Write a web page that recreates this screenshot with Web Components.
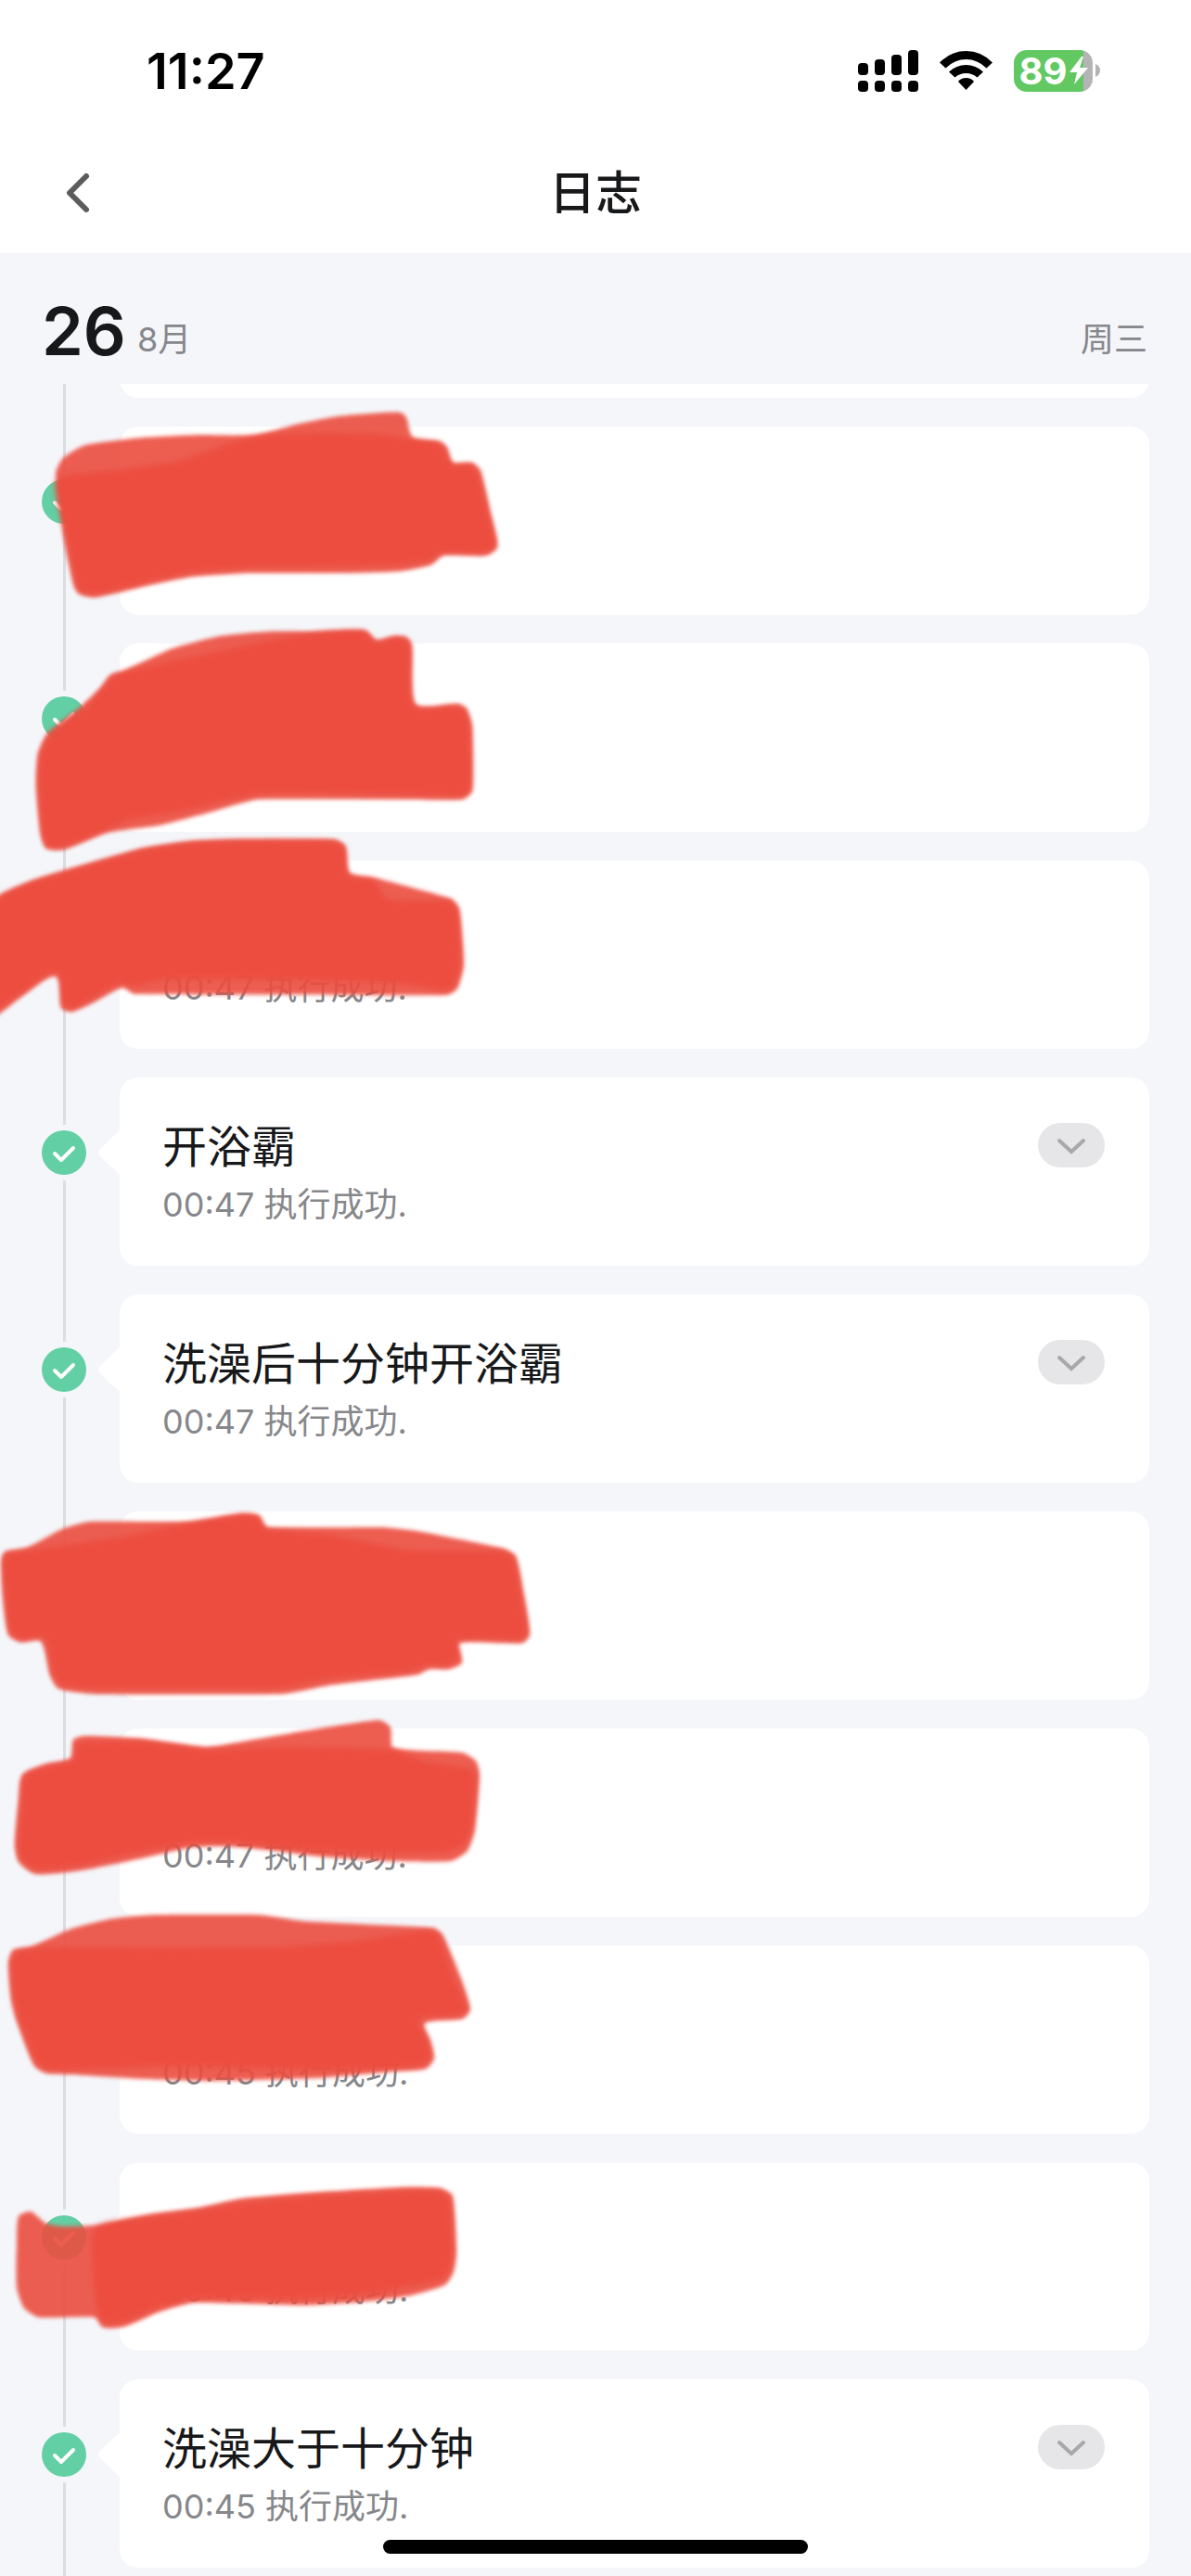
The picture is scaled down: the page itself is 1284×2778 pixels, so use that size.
<!DOCTYPE html>
<html lang="zh-CN">
<head>
<meta charset="utf-8">
<meta name="viewport" content="width=device-width, initial-scale=1">
<title>日志</title>
<style>
   body {
      margin: 0;
      background: #f5f6fa;
      color: #17181a;
      font-family: Inter, "Noto Sans CJK SC", sans-serif;
   }
</style>
</head>
<body>
<log-page>
   <status-bar slot="top" time="11:27" battery="89"></status-bar>
   <nav-bar slot="top">日志</nav-bar>
   <date-row slot="top" day="26" month="8月" weekday="周三"></date-row>

   <log-entry class="scrolled"></log-entry>
   <log-entry>
      <marker-scribble slot="mark"
         wash="60,50 68,34 92,20 153,12 214,9 276,9 318,-2 364,-11 413,-15 432,-15 438,-10 445,12 474,16 482,22 488,39 509,39 518,47 529,93 536,130 524,139 478,139 465,149 432,156 375,158 268,158 207,162 165,170 103,184 86,181 80,173 69,120 64,70"
         core="61,58 120,48 190,38 240,21 280,10 340,7 405,8 446,14 474,19 488,41 506,41 514,50 526,94 534,128 522,136 476,136 462,145 430,149 375,151 268,152 207,157 165,166 103,181 88,178 83,170 72,120"></marker-scribble>
   </log-entry>
   <log-entry>
      <marker-scribble slot="mark"
         wash="39,153 41,119 51,97 87,68 108,48 119,34 132,30 184,6 237,-8 291,-13 337,-13 394,-14 406,-4 425,-8 438,-7 444,0 448,65 494,65 503,70 509,89 509,159 499,168 440,168 279,168 230,181 172,196 115,204 69,222 50,221 44,206"
         core="42,153 44,119 55,99 92,70 110,50 122,35 134,31 190,18 240,8 300,-5 350,-12 392,-13 405,-1 425,-6 436,-5 442,8 445,67 492,68 501,73 506,89 507,157 497,164 440,163 279,162 200,180 140,190 110,203 69,219 51,218 46,204"></marker-scribble>
   </log-entry>
   <log-entry time="00:47">
      <marker-scribble slot="mark"
         wash="-12,49 0,37 34,22 69,11 153,-13 207,-21 260,-23 360,-23 372,-16 377,13 406,19 486,41 495,52 500,112 493,138 482,145 380,145 145,144 132,137 99,154 77,163 66,159 60,125 23,147 -12,168"
         core="-12,53 4,37 36,23 69,13 153,-11 207,-19 260,-21 358,-20 371,-14 375,16 402,21 418,42 484,44 493,54 496,112 489,136 478,140 430,132 300,128 180,128 142,136 130,132 97,150 77,160 69,156 61,120 23,143 -12,160"></marker-scribble>
   </log-entry>
   <log-entry time="00:47">开浴霸</log-entry>
   <log-entry time="00:47">洗澡后十分钟开浴霸</log-entry>
   <log-entry>
      <marker-scribble slot="mark"
         wash="2,50 6,43 29,39 67,19 97,11 206,11 261,2 279,4 288,17 412,17 455,22 543,40 556,48 565,90 571,133 563,142 496,142 498,163 484,170 463,170 450,176 358,187 303,197 105,197 63,191 54,177 44,140 22,141 9,133 3,90"
         core="3,53 8,46 60,38 130,28 206,12 261,4 277,6 287,19 360,26 440,42 540,43 553,50 561,90 568,131 560,138 493,138 494,160 481,166 460,166 446,172 358,180 303,190 105,191 67,187 58,175 48,136 23,137 12,130 6,90"></marker-scribble>
   </log-entry>
   <log-entry time="00:47">
      <marker-scribble slot="mark"
         wash="24,50 50,38 76,32 79,12 92,8 153,11 222,20 268,13 344,0 409,-9 421,-1 424,21 498,26 513,35 517,49 512,109 504,132 486,143 421,143 344,138 291,131 245,127 207,128 153,140 88,153 38,157 20,144 16,126 20,76"
         core="27,51 53,41 80,34 84,16 153,14 222,23 300,20 420,23 460,36 508,44 513,52 508,108 499,126 480,133 421,134 344,132 291,127 245,122 207,123 153,133 88,147 40,152 24,141 20,126 24,76"></marker-scribble>
   </log-entry>
   <log-entry time="00:45">
      <marker-scribble slot="mark"
         wash="9,19 14,5 34,1 77,-18 122,-29 168,-33 279,-33 329,-26 467,-19 477,-12 497,35 507,69 499,79 458,84 464,102 468,122 459,133 421,136 344,143 230,146 153,144 77,139 50,138 37,130 18,82 12,59"
         core="13,19 18,7 60,2 160,3 300,2 380,-4 462,-16 473,-9 490,38 503,68 495,75 452,80 460,102 464,120 455,129 421,132 344,134 230,131 153,131 77,134 52,133 40,126 22,81 16,58"></marker-scribble>
   </log-entry>
   <log-entry time="00:45">
      <marker-scribble slot="mark"
         wash="20,58 33,53 50,66 69,69 111,67 161,56 214,49 260,39 329,33 432,27 475,28 488,36 492,95 489,118 480,132 440,144 383,151 325,154 210,151 172,161 134,177 111,178 102,167 42,167 26,157 18,135 18,88"
         core="104,70 161,59 214,52 260,44 329,37 432,31 473,31 484,39 488,95 485,115 474,127 430,136 383,143 325,147 210,147 172,156 134,172 113,173 105,160 101,120"></marker-scribble>
   </log-entry>
   <log-entry time="00:45">洗澡大于十分钟</log-entry>
</log-page>

<script>
class LogPage extends HTMLElement {
   constructor() {
      super();
      this.attachShadow({mode: 'open'}).innerHTML = `
         <style>
            :host {
               display: flex;
               flex-direction: column;
               height: 100vh;
               overflow: hidden;
            }
            main {
               flex: 1;
               min-height: 0;
               overflow: hidden;
            }
            /* rows already scrolled under the date */
            ::slotted(.scrolled) {
               margin-top: -188px;
            }
            .home {
               position: fixed;
               bottom: 24px;
               left: 50%;
               z-index: 2;
               width: 458px;
               height: 15px;
               margin-left: -229px;
               border-radius: 8px;
               background: #000;
            }
         </style>
         <slot name="top"></slot>
         <main><slot></slot></main>
         <div class="home"></div>
      `;
   }
}
customElements.define('log-page', LogPage);

class StatusBar extends HTMLElement {
   connectedCallback() {
      this.attachShadow({mode: 'open'}).innerHTML = `
         <style>
            :host {
               display: flex;
               justify-content: space-between;
               align-items: center;
               height: 152px;
               padding: 0 98px 0 158px;
               background: #fff;
               color: #000;
            }
            time {
               padding-top: 2px;
               font-size: 54px;
               font-weight: 600;
               line-height: 64px;
            }
            .icons {
               display: flex;
               align-items: center;
               gap: 23px;
            }
            svg {
               display: block;
            }
            .battery {
               display: flex;
               align-items: center;
               gap: 3px;
            }
            .level {
               display: flex;
               align-items: center;
               justify-content: center;
               gap: 2px;
               width: 85px;
               height: 45px;
               border-radius: 14px;
               background: linear-gradient(90deg, #62c962 75px, #b5b3b6 75px);
               color: #fff;
               font-size: 40px;
               font-weight: 700;
               line-height: 45px;
            }
         </style>
         <time>${this.getAttribute('time')}</time>
         <div class="icons">
            <svg width="65" height="45" viewBox="0 0 65 45">
               <rect x="0" y="14" width="11" height="13" rx="4"/>
               <rect x="18" y="10" width="11" height="17" rx="4"/>
               <rect x="36" y="5" width="11" height="22" rx="4"/>
               <rect x="54" y="0" width="11" height="27" rx="4"/>
               <rect x="0" y="33" width="11" height="12" rx="4"/>
               <rect x="18" y="33" width="11" height="12" rx="4"/>
               <rect x="36" y="33" width="11" height="12" rx="4"/>
               <rect x="54" y="33" width="11" height="12" rx="4"/>
            </svg>
            <svg width="57" height="42" viewBox="0 0 57 42">
               <path d="M0 12.500Q12 0 28.500 0T57 12.500L50.500 18.500Q41 9 28.500 9T6.500 18.500Z"/>
               <path d="M10 22.500Q18 15 28.500 15T47 22.500L40.500 28.500Q35.500 24 28.500 24T16.500 28.500Z"/>
               <path d="M20 33Q23 29 28.500 29T37 33L28.500 42Z"/>
            </svg>
            <div class="battery">
               <div class="level">
                  <span>${this.getAttribute('battery')}</span>
                  <svg width="20" height="30" viewBox="0 0 20 30">
                     <path d="M13 0L0 17H8L5 30L20 12H11L15 0Z" fill="#fff"/>
                  </svg>
               </div>
               <svg width="5" height="14" viewBox="0 0 5 14">
                  <path d="M0 0Q5 2 5 7T0 14Z" fill="#b5b3b6"/>
               </svg>
            </div>
         </div>
      `;
   }
}
customElements.define('status-bar', StatusBar);

class NavBar extends HTMLElement {
   constructor() {
      super();
      this.attachShadow({mode: 'open'}).innerHTML = `
         <style>
            :host {
               display: grid;
               grid-template-columns: 120px 1fr 120px;
               align-items: center;
               height: 121px;
               box-sizing: border-box;
               padding-bottom: 10px;
               background: #fff;
            }
            button {
               width: 120px;
               height: 96px;
               padding: 0 0 0 70px;
               border: 0;
               background: none;
            }
            svg {
               display: block;
            }
            h1 {
               margin: 0;
               font-size: 50px;
               font-weight: 500;
               line-height: 64px;
               text-align: center;
            }
         </style>
         <button type="button" aria-label="返回">
            <svg width="28" height="46" viewBox="0 0 28 46" fill="none" stroke="#5c5c5e" stroke-width="6" stroke-linecap="round" stroke-linejoin="round">
               <path d="M23 5L5 23L23 41"/>
            </svg>
         </button>
         <h1><slot></slot></h1>
      `;
   }
}
customElements.define('nav-bar', NavBar);

class DateRow extends HTMLElement {
   connectedCallback() {
      this.attachShadow({mode: 'open'}).innerHTML = `
         <style>
            :host {
               display: flex;
               align-items: flex-end;
               gap: 12px;
               height: 141px;
               box-sizing: border-box;
               padding: 0 47px 13px 45px;
               color: #86878b;
               font-size: 36px;
               line-height: 70px;
            }
            strong {
               color: #17181a;
               font-size: 72px;
               font-weight: 600;
               line-height: 88px;
            }
            .weekday {
               margin-left: auto;
            }
         </style>
         <strong>${this.getAttribute('day')}</strong>
         <span>${this.getAttribute('month')}</span>
         <span class="weekday">${this.getAttribute('weekday')}</span>
      `;
   }
}
customElements.define('date-row', DateRow);

class LogEntry extends HTMLElement {
   connectedCallback() {
      const time = this.getAttribute('time');
      const titled = this.textContent.trim() !== '';

      this.attachShadow({mode: 'open'}).innerHTML = `
         <style>
            :host {
               display: grid;
               grid-template-columns: 105px 24px 1fr;
               position: relative;
               padding-right: 45px;
            }
            .rail {
               display: flex;
               flex-direction: column;
               padding: 0 12px 0 45px;
            }
            .line {
               width: 3px;
               height: 51px;
               margin-left: 23px;
               background: #dcdde1;
            }
            .line.rest {
               flex: 1;
            }
            .dot {
               display: block;
               margin: 6px 0;
            }
            .pointer {
               display: block;
               margin-top: 57px;
            }
            .card {
               display: flex;
               justify-content: space-between;
               align-items: flex-start;
               min-height: 203px;
               box-sizing: border-box;
               margin-bottom: 31px;
               padding: 49px 48px 42px 46px;
               border-radius: 20px;
               background: #fff;
            }
            h2 {
               min-height: 52px;
               margin: 0 0 12px;
               font-size: 48px;
               font-weight: 400;
               line-height: 52px;
            }
            p {
               margin: 0;
               color: #86878b;
               font-size: 36px;
               line-height: 48px;
            }
            button {
               display: flex;
               align-items: center;
               justify-content: center;
               width: 72px;
               height: 48px;
               padding: 0;
               border: 0;
               border-radius: 24px;
               background: #e6e6e8;
            }
         </style>
         <div class="rail">
            <div class="line"></div>
            <svg class="dot" width="48" height="48" viewBox="0 0 48 48">
               <circle cx="24" cy="24" r="24" fill="#63cfa5"/>
               <path d="M14 25L21 32L34 19" fill="none" stroke="#fff" stroke-width="4" stroke-linecap="round" stroke-linejoin="round"/>
            </svg>
            <div class="line rest"></div>
         </div>
         <svg class="pointer" width="24" height="48" viewBox="0 0 24 48">
            <path d="M24 0V48L3 28Q-1 24 3 20Z" fill="#fff"/>
         </svg>
         <div class="card">
            <div>
               <h2><slot></slot></h2>
               ${time ? `<p>${time} 执行成功.</p>` : ''}
            </div>
            ${titled ? `
            <button type="button" aria-label="展开">
               <svg width="34" height="20" viewBox="0 0 34 20" fill="none" stroke="#a8a8aa" stroke-width="4" stroke-linecap="round">
                  <path d="M4 5L17 17L30 5"/>
               </svg>
            </button>` : ''}
         </div>
         <slot name="mark"></slot>
      `;
   }
}
customElements.define('log-entry', LogEntry);

// Closed curve through every point, tight enough to keep the corners.
function curve(list) {
   const p = list.trim().split(/\s+/).map(s => s.split(',').map(Number));
   const n = p.length;
   let d = `M${p[0]}`;
   for (let i = 0; i < n; i++) {
      const [a, b, c, e] = [p[(i + n - 1) % n], p[i], p[(i + 1) % n], p[(i + 2) % n]];
      const len = Math.min(Math.hypot(c[0] - b[0], c[1] - b[1]) / 5, 10);
      const t1 = Math.hypot(c[0] - a[0], c[1] - a[1]) || 1;
      const t2 = Math.hypot(e[0] - b[0], e[1] - b[1]) || 1;
      d += `C${b[0] + (c[0] - a[0]) / t1 * len},${b[1] + (c[1] - a[1]) / t1 * len}`
         + ` ${c[0] - (e[0] - b[0]) / t2 * len},${c[1] - (e[1] - b[1]) / t2 * len}`
         + ` ${c}`;
   }
   return d + 'Z';
}

class MarkerScribble extends HTMLElement {
   connectedCallback() {
      this.attachShadow({mode: 'open'}).innerHTML = `
         <style>
            :host {
               position: absolute;
               top: 0;
               left: 0;
               z-index: 1;
               pointer-events: none;
            }
            svg {
               display: block;
               overflow: visible;
               fill: #ec4d3f;
            }
            .wash {
               opacity: .9;
               filter: blur(2px);
            }
            .core {
               filter: blur(3px);
            }
         </style>
         <svg width="600" height="203">
            <path class="wash" d="${curve(this.getAttribute('wash'))}"/>
            <path class="core" d="${curve(this.getAttribute('core'))}"/>
         </svg>
      `;
   }
}
customElements.define('marker-scribble', MarkerScribble);
</script>
</body>
</html>
